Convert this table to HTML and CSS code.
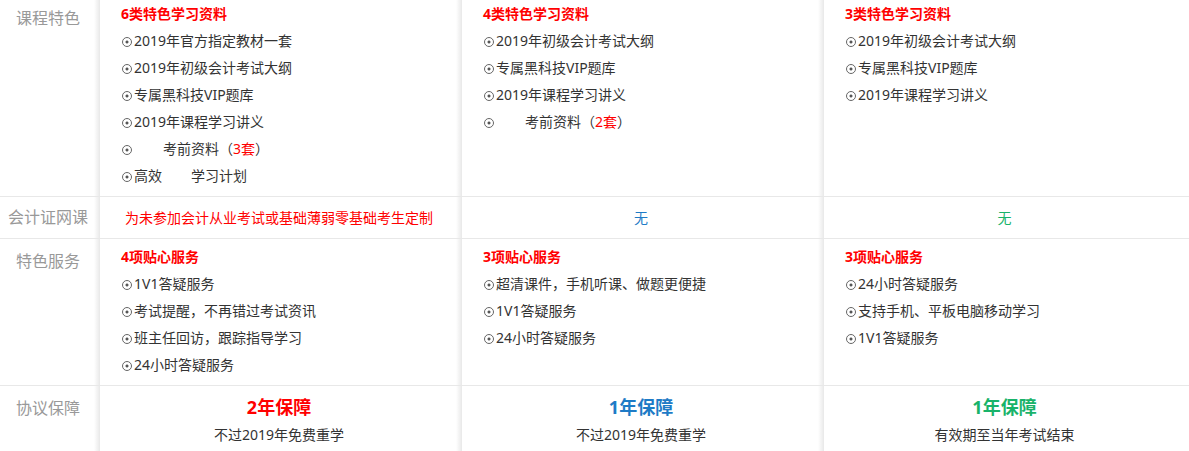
FILE: index.html
```html
<!DOCTYPE html>
<html>
  <head>
    <title>课程对比</title>
    <meta name="viewport" content="width=device-width">
    <link rel="stylesheet" href="styles.css">
  </head>
  <body>
    <div class="compare">
      <!-- 课程特色 -->
      <div class="label">课程特色</div>
      <div class="cell">
        <p class="head">6类特色学习资料</p>
        <ul class="list">
          <li>2019年官方指定教材一套</li>
          <li>2019年初级会计考试大纲</li>
          <li>专属黑科技VIP题库</li>
          <li>2019年课程学习讲义</li>
          <li><span class="blank"></span>考前资料（<em>3套</em>）</li>
          <li>高效<span class="blank"></span>学习计划</li>
        </ul>
      </div>
      <div class="cell">
        <p class="head">4类特色学习资料</p>
        <ul class="list">
          <li>2019年初级会计考试大纲</li>
          <li>专属黑科技VIP题库</li>
          <li>2019年课程学习讲义</li>
          <li><span class="blank"></span>考前资料（<em>2套</em>）</li>
        </ul>
      </div>
      <div class="cell last">
        <p class="head">3类特色学习资料</p>
        <ul class="list">
          <li>2019年初级会计考试大纲</li>
          <li>专属黑科技VIP题库</li>
          <li>2019年课程学习讲义</li>
        </ul>
      </div>

      <!-- 会计证网课 -->
      <div class="label single">会计证网课</div>
      <div class="cell single red">为未参加会计从业考试或基础薄弱零基础考生定制</div>
      <div class="cell single blue">无</div>
      <div class="cell single green last">无</div>

      <!-- 特色服务 -->
      <div class="label">特色服务</div>
      <div class="cell">
        <p class="head">4项贴心服务</p>
        <ul class="list">
          <li>1V1答疑服务</li>
          <li>考试提醒，不再错过考试资讯</li>
          <li>班主任回访，跟踪指导学习</li>
          <li>24小时答疑服务</li>
        </ul>
      </div>
      <div class="cell">
        <p class="head">3项贴心服务</p>
        <ul class="list">
          <li>超清课件，手机听课、做题更便捷</li>
          <li>1V1答疑服务</li>
          <li>24小时答疑服务</li>
        </ul>
      </div>
      <div class="cell last">
        <p class="head">3项贴心服务</p>
        <ul class="list">
          <li>24小时答疑服务</li>
          <li>支持手机、平板电脑移动学习</li>
          <li>1V1答疑服务</li>
        </ul>
      </div>

      <!-- 协议保障 -->
      <div class="label">协议保障</div>
      <div class="cell guard">
        <p class="years red">2年保障</p>
        <p class="note">不过2019年免费重学</p>
      </div>
      <div class="cell guard">
        <p class="years blue">1年保障</p>
        <p class="note">不过2019年免费重学</p>
      </div>
      <div class="cell guard last">
        <p class="years green">1年保障</p>
        <p class="note">有效期至当年考试结束</p>
      </div>
    </div>
  </body>
</html>
```

FILE: styles.css
```css
* { margin: 0; padding: 0; }
body {
  font-family: "Noto Sans", "Noto Sans CJK SC", sans-serif;
  font-size: 14px;
  color: #333;
  background: #fff;
  overflow: hidden;
}

.compare {
  display: grid;
  grid-template-columns: 100px 362px 362px 1fr;
  margin-top: -4px;
}

.label,
.cell {
  border-bottom: 1px solid #e8e8e8;
  background-image: linear-gradient(to left, rgba(0, 0, 0, .09), rgba(0, 0, 0, 0) 6px);
}
.cell.last {
  background-image: none;
}

.label {
  font-size: 16px;
  line-height: 26px;
  color: #999;
  text-align: center;
  padding: 9px 4px 0 0;
}

.cell {
  padding: 5px 25px 7px 21px;
}

.single {
  padding-top: 0;
  padding-bottom: 0;
  line-height: 41px;
}
.cell.single {
  text-align: center;
}

.head {
  font-weight: bold;
  color: #f00;
  line-height: 26px;
}

.list {
  list-style: none;
}
.list li {
  line-height: 27px;
  white-space: nowrap;
}
.list li::before {
  content: "";
  display: inline-block;
  width: 8px;
  height: 8px;
  border: 1px solid #666;
  border-radius: 50%;
  background: radial-gradient(circle, #555 1.2px, transparent 1.8px);
  margin: 0 2px 0 1px;
  vertical-align: -1px;
}
.list em {
  font-style: normal;
  color: #f00;
}
.blank {
  display: inline-block;
  width: 29px;
}

.guard {
  text-align: center;
  padding-top: 7px;
}
.years {
  font-size: 18px;
  font-weight: bold;
  line-height: 28px;
}
.note {
  line-height: 27px;
  color: #333;
}

.red { color: #f00; }
.blue { color: #1e7bc6; }
.green { color: #19b36a; }
```
